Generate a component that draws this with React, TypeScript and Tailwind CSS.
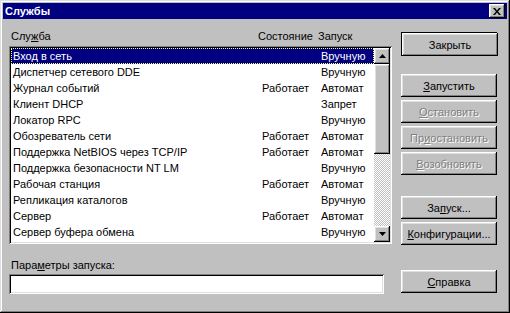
import React from 'react';

// строки списка служб
const services = [
  { name: 'Вход в сеть', state: '', start: 'Вручную' },
  { name: 'Диспетчер сетевого DDE', state: '', start: 'Вручную' },
  { name: 'Журнал событий', state: 'Работает', start: 'Автомат' },
  { name: 'Клиент DHCP', state: '', start: 'Запрет' },
  { name: 'Локатор RPC', state: '', start: 'Вручную' },
  { name: 'Обозреватель сети', state: 'Работает', start: 'Автомат' },
  { name: 'Поддержка NetBIOS через TCP/IP', state: 'Работает', start: 'Автомат' },
  { name: 'Поддержка безопасности NT LM', state: '', start: 'Вручную' },
  { name: 'Рабочая станция', state: 'Работает', start: 'Автомат' },
  { name: 'Репликация каталогов', state: '', start: 'Вручную' },
  { name: 'Сервер', state: 'Работает', start: 'Автомат' },
  { name: 'Сервер буфера обмена', state: '', start: 'Вручную' },
];

const raised =
  'shadow-[inset_-1px_-1px_0_#000,inset_1px_1px_0_#fff,inset_-2px_-2px_0_#808080,inset_2px_2px_0_#dfdfdf]';
const sunken =
  'shadow-[inset_1px_1px_0_#808080,inset_-1px_-1px_0_#fff,inset_2px_2px_0_#000,inset_-2px_-2px_0_#dfdfdf]';

const Btn = ({ children, disabled = false, className = '' }: { children: React.ReactNode; disabled?: boolean; className?: string }) => (
  <div
    className={
      'w-[96px] h-[23px] flex items-center justify-center bg-[#c0c0c0] ' +
      raised +
      ' ' +
      (disabled ? 'text-[#808080] [text-shadow:1px_1px_0_#fff] ' : 'text-black ') +
      className
    }
  >
    <span>{children}</span>
  </div>
);

const Arrow = ({ down = false }: { down?: boolean }) => (
  <div className={'w-[16px] h-[16px] flex items-center justify-center bg-[#c0c0c0] ' + raised}>
    <svg width="7" height="4" viewBox="0 0 7 4">
      {down ? <polygon points="0,0 7,0 3.5,4" fill="#000" /> : <polygon points="3.5,0 7,4 0,4" fill="#000" />}
    </svg>
  </div>
);

export default function App() {
  return (
    <div
      className="w-[510px] h-[313px] bg-[#c0c0c0] p-[3px] flex flex-col text-[11px] leading-[14px] text-black shadow-[inset_-1px_-1px_0_#000,inset_1px_1px_0_#dfdfdf,inset_-2px_-2px_0_#808080,inset_2px_2px_0_#fff]"
      style={{ fontFamily: '"Liberation Sans", Arial, sans-serif' }}
    >
      {/* заголовок окна */}
      <div className="h-[16px] bg-[#000080] flex items-center justify-between pl-[2px] pr-[2px]">
        <span className="text-white font-bold">Службы</span>
        <div className={'w-[16px] h-[14px] flex items-center justify-center bg-[#c0c0c0] ' + raised}>
          <svg width="8" height="7" viewBox="0 0 8 7">
            <path d="M0 0h2l2 2.5 2-2.5h2l-3 3.5 3 3.5h-2l-2-2.5-2 2.5h-2l3-3.5z" fill="#000" />
          </svg>
        </div>
      </div>

      <div className="flex flex-1">
        {/* левая часть */}
        <div className="ml-[6px] flex flex-col">
          <div className="mt-[10px] h-[14px] relative w-[383px]">
            <span className="absolute left-[2px]">
              Слу<u>ж</u>ба
            </span>
            <span className="absolute left-[249px]">Состояние</span>
            <span className="absolute left-[309px]">Запуск</span>
          </div>
          <div className={'mt-[3px] w-[383px] h-[198px] bg-white p-[2px] flex ' + sunken}>
            <div className="flex-1 flex flex-col">
              {services.map((s, i) => (
                <div
                  key={s.name}
                  className={
                    'h-[16px] flex items-center ' +
                    (i === 0 ? 'bg-[#000080] text-white border border-dotted border-[#ffff80]' : '')
                  }
                >
                  <span className={i === 0 ? 'pl-[1px] w-[250px]' : 'pl-[2px] w-[251px]'}>{s.name}</span>
                  <span className="w-[59px]">{s.state}</span>
                  <span>{s.start}</span>
                </div>
              ))}
            </div>
            <div className="w-[16px] flex flex-col">
              <Arrow />
              <div className={'h-[90px] bg-[#c0c0c0] ' + raised}></div>
              <div className="flex-1 bg-[repeating-conic-gradient(#c0c0c0_0%_25%,#fff_0%_50%)] bg-[length:2px_2px]"></div>
              <Arrow down />
            </div>
          </div>
          <div className="mt-[14px] h-[14px] pl-[2px]">
            Пара<u>м</u>етры запуска:
          </div>
          <div className={'mt-[2px] w-[375px] h-[20px] bg-white ' + sunken}></div>
        </div>

        {/* кнопки справа */}
        <div className="ml-[9px] flex flex-col">
          <div className="mt-[13px] w-[96px] h-[24px] border border-black">
            <Btn className="w-[94px] h-[22px]">Закрыть</Btn>
          </div>
          <div className="mt-[18px] flex flex-col gap-[3px]">
            <Btn>
              <u>З</u>апустить
            </Btn>
            <Btn disabled>
              <u>О</u>становить
            </Btn>
            <Btn disabled>
              Пр<u>и</u>остановить
            </Btn>
            <Btn disabled>
              <u>В</u>озобновить
            </Btn>
          </div>
          <div className="mt-[21px] flex flex-col gap-[3px]">
            <Btn>
              За<u>п</u>уск...
            </Btn>
            <Btn>
              <u>К</u>онфигурации...
            </Btn>
          </div>
          <div className="mt-[25px]">
            <Btn>
              <u>С</u>правка
            </Btn>
          </div>
        </div>
      </div>
    </div>
  );
}
